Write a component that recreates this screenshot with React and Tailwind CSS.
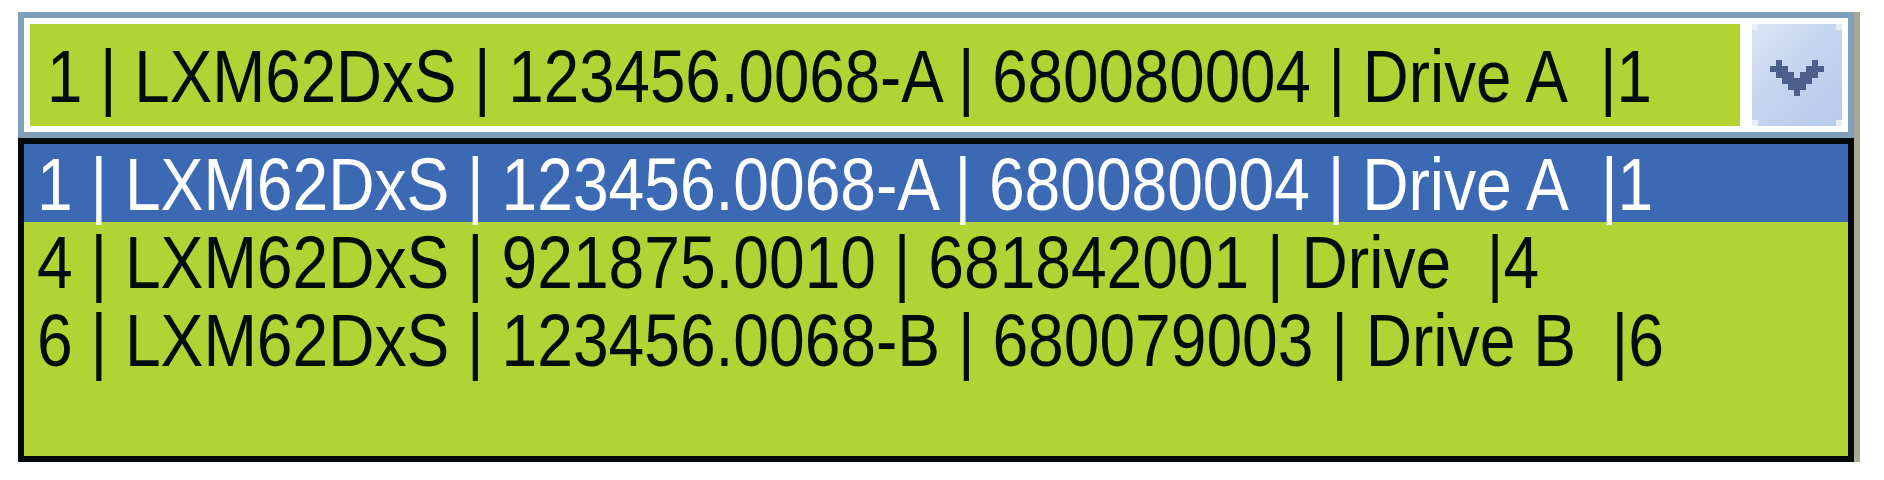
const rows = [
  { label: '1 | LXM62DxS | 123456.0068-A | 680080004 | Drive A  |1', selected: true },
  { label: '4 | LXM62DxS | 921875.0010 | 681842001 | Drive  |4', selected: false },
  { label: '6 | LXM62DxS | 123456.0068-B | 680079003 | Drive B  |6', selected: false },
];

// chevron drawn on the 6px pixel grid of the screenshot (9 x 6 cells)
const chevronCells = [
  [1, 0], [7, 0],
  [0, 1], [1, 1], [2, 1], [6, 1], [7, 1], [8, 1],
  [1, 2], [2, 2], [3, 2], [5, 2], [6, 2], [7, 2],
  [2, 3], [3, 3], [4, 3], [5, 3], [6, 3],
  [3, 4], [4, 4], [5, 4],
  [4, 5],
];

const Chevron = () => (
  <svg width="54" height="36" viewBox="0 0 9 6" shapeRendering="crispEdges">
    {chevronCells.map(([x, y]) => (
      <rect key={`${x}-${y}`} x={x} y={y} width="1" height="1" fill="#4b5f8a" />
    ))}
  </svg>
);

const DropButton = () => (
  <div className="relative flex h-[102px] w-[90px] shrink-0 justify-center bg-[linear-gradient(135deg,#dbe5f7,#c6d5ef_45%,#b6caeb)] pt-[36px]">
    <span className="absolute left-0 top-0 h-[6px] w-[6px] bg-[#e6edf9]" />
    <span className="absolute right-0 top-0 h-[6px] w-[6px] bg-[#e6edf9]" />
    <span className="absolute bottom-0 left-0 h-[6px] w-[6px] bg-[#e6edf9]" />
    <span className="absolute bottom-0 right-0 h-[6px] w-[6px] bg-[#e6edf9]" />
    <Chevron />
  </div>
);

// the original font is a narrow bitmap face, so the text is squeezed horizontally
const Label = ({ children, squeeze }) => (
  <span className={`${squeeze} -mr-[300px] inline-block origin-left whitespace-pre`}>{children}</span>
);

export default function App() {
  return (
    <div className="flex h-[480px] w-[1884px] bg-white pl-[18px] pt-[12px] font-['Liberation_Sans',Arial,sans-serif] text-[75px] text-[#050a0a]">
      <div className="flex w-[1836px] shrink-0 flex-col">
        {/* closed combo box */}
        <div className="flex h-[126px] gap-[12px] border-[6px] border-[#7fa0bb] bg-white p-[6px]">
          <div className="h-[102px] min-w-0 flex-1 whitespace-nowrap bg-[#b3d335] pl-[17px] leading-[104px]">
            <Label squeeze="scale-x-[0.849]">{rows[0].label}</Label>
          </div>
          <DropButton />
        </div>

        {/* open list */}
        <div className="h-[324px] border-[6px] border-[#040a0b] bg-[#b3d335]">
          {rows.map((row) => (
            <div
              key={row.label}
              className={
                row.selected
                  ? 'h-[78px] whitespace-nowrap bg-[#3b69b3] pl-[13px] leading-[80px] text-white'
                  : 'h-[78px] whitespace-nowrap pl-[13px] leading-[80px]'
              }
            >
              <Label squeeze="scale-x-[0.855]">{row.label}</Label>
            </div>
          ))}
        </div>
      </div>
      <div className="h-[450px] w-[6px] shrink-0 bg-[#aba798]" />
    </div>
  );
}
